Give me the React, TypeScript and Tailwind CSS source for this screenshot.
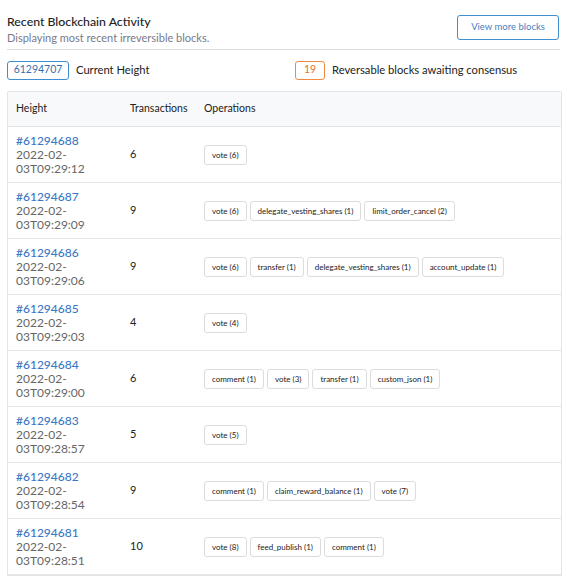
const blocks = [
  { h: 61294688, t: "2022-02-03T09:29:12", tx: 6, ops: ["vote (6)"] },
  { h: 61294687, t: "2022-02-03T09:29:09", tx: 9, ops: ["vote (6)", "delegate_vesting_shares (1)", "limit_order_cancel (2)"] },
  { h: 61294686, t: "2022-02-03T09:29:06", tx: 9, ops: ["vote (6)", "transfer (1)", "delegate_vesting_shares (1)", "account_update (1)"] },
  { h: 61294685, t: "2022-02-03T09:29:03", tx: 4, ops: ["vote (4)"] },
  { h: 61294684, t: "2022-02-03T09:29:00", tx: 6, ops: ["comment (1)", "vote (3)", "transfer (1)", "custom_json (1)"] },
  { h: 61294683, t: "2022-02-03T09:28:57", tx: 5, ops: ["vote (5)"] },
  { h: 61294682, t: "2022-02-03T09:28:54", tx: 9, ops: ["comment (1)", "claim_reward_balance (1)", "vote (7)"] },
  { h: 61294681, t: "2022-02-03T09:28:51", tx: 10, ops: ["vote (8)", "feed_publish (1)", "comment (1)"] },
];

export default function App() {
  return (
    <div className="bg-white text-[#333] font-['Lato',sans-serif] px-[7px] pt-[14px] min-h-[577px]">
      <div className="flex items-start justify-between pb-[4px] border-b border-[#dcdcdc]">
        <div>
          <h2 className="text-[12.3px] leading-[16px] font-medium text-[#222]">Recent Blockchain Activity</h2>
          <p className="text-[11px] leading-[15px] text-[#777a8a]">Displaying most recent irreversible blocks.</p>
        </div>
        <button className="mr-[1px] mt-px h-[25px] w-[102px] rounded-[3px] border border-[#3f8fd0] text-[9.5px] text-[#4a7fc0]">
          View more blocks
        </button>
      </div>

      <div className="flex items-center mt-[10px] h-[20px]">
        <div className="flex items-center w-[288px]">
          <span className="h-[19px] w-[62px] flex items-center justify-center rounded-[3px] border border-[#3f8fd0] text-[10.5px] text-[#3a6fb0]">61294707</span>
          <span className="ml-[7px] text-[11.2px] text-[#222]">Current Height</span>
        </div>
        <div className="flex items-center">
          <span className="h-[19px] w-[30px] flex items-center justify-center rounded-[3px] border border-[#f08a3e] text-[10.5px] text-[#e8702a]">19</span>
          <span className="ml-[7px] text-[11.2px] text-[#222]">Reversable blocks awaiting consensus</span>
        </div>
      </div>

      <div className="mt-[11px] border border-[#e2e4e8] rounded-t-[2px] w-[555px]">
        <div className="flex items-center h-[35px] bg-[#f8f9fa] border-b border-[#e2e4e8] text-[10.5px] text-[#222]">
          <div className="w-[114px] pl-[8px]">Height</div>
          <div className="w-[73px] pl-[8px]">Transactions</div>
          <div className="pl-[9px]">Operations</div>
        </div>
        {blocks.map((b) => (
          <div key={b.h} className="flex items-center h-[56px] border-b border-[#e6e6e6]">
            <div className="w-[114px] pl-[8px] pr-[8px] text-[12px] leading-[14px]">
              <div className="text-[#3b78c4] font-medium">#{b.h}</div>
              <div className="text-[#666]">2022-02-<br />{b.t.slice(8)}</div>
            </div>
            <div className="w-[73px] pl-[8px] text-[11px] text-[#222]">{b.tx}</div>
            <div className="flex gap-[3px] pl-[9px]">
              {b.ops.map((o) => (
                <span key={o} className="h-[20px] px-[7px] flex items-center rounded-[3px] border border-[#dcdcdc] text-[8px] text-[#222] whitespace-nowrap">
                  {o}
                </span>
              ))}
            </div>
          </div>
        ))}
      </div>
    </div>
  );
}
